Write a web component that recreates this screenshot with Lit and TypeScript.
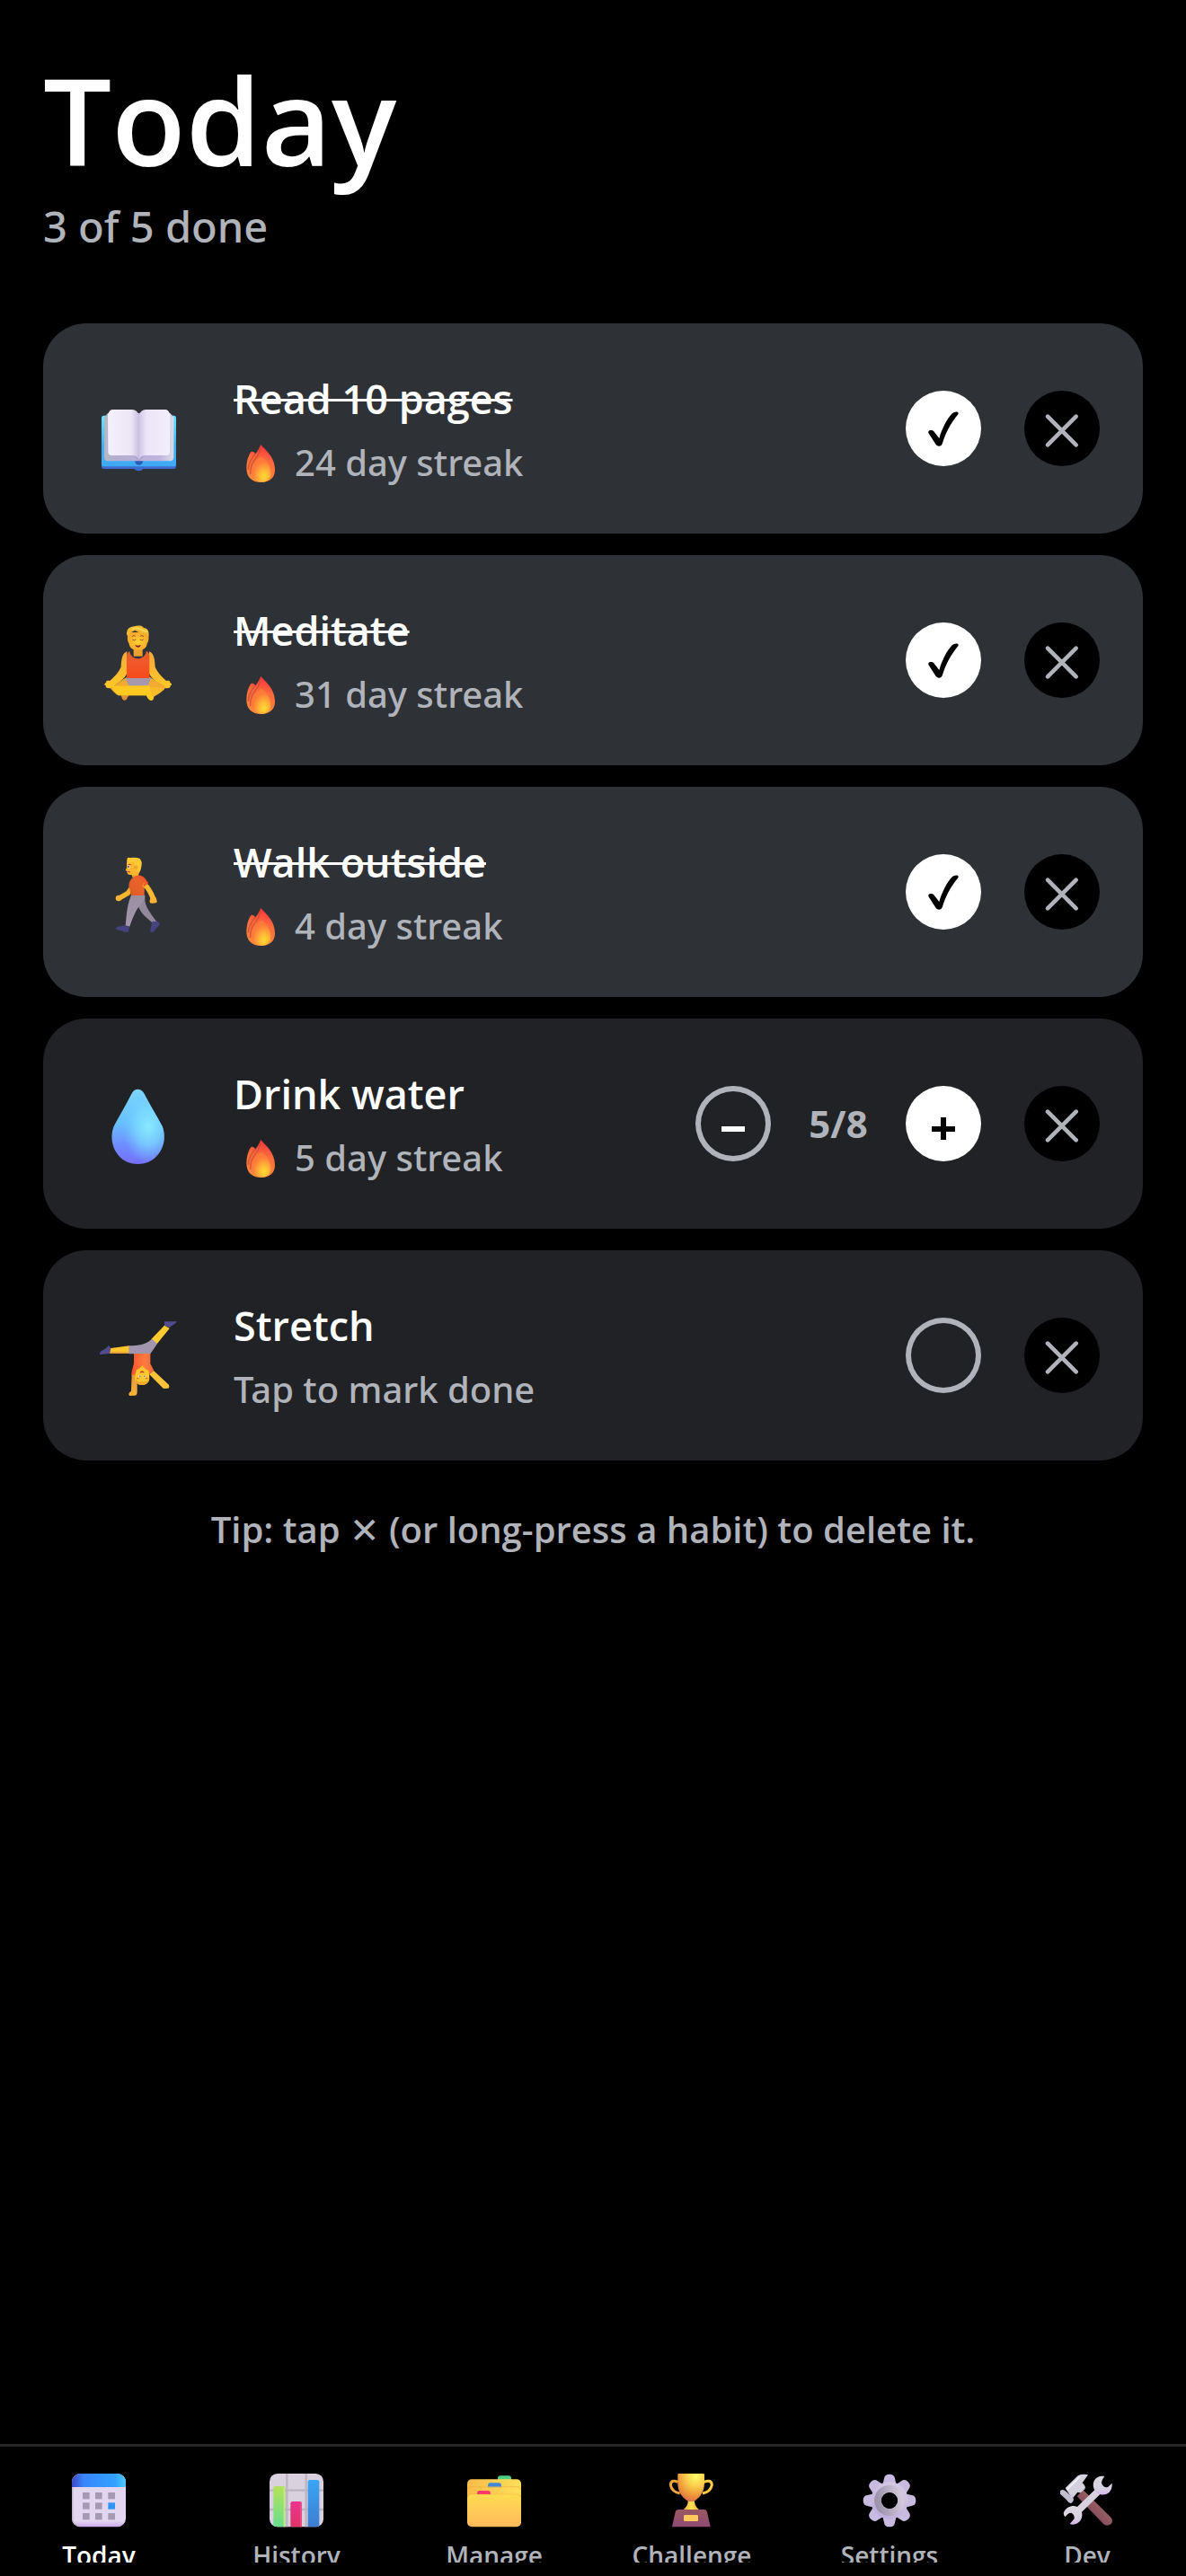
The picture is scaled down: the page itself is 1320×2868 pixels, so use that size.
import { LitElement, html, css, svg, nothing, type TemplateResult } from 'lit';
import { customElement, property, state } from 'lit/decorators.js';
import { classMap } from 'lit/directives/class-map.js';

interface Habit {
  name: string;
  icon: string;
  streak: number;
  count: number;
  target: number;
}

const art: Record<string, TemplateResult> = {
  book: html`<svg viewBox="168 207 348 348" aria-hidden="true">
    <defs>
      <linearGradient id="bookCover" x1="0" y1="0" x2="0" y2="1">
        <stop offset="0" stop-color="#6be4ff" /><stop offset=".6" stop-color="#45aef0" /><stop offset="1" stop-color="#3fa9f5" />
      </linearGradient>
      <linearGradient id="bookLeft"><stop offset="0" stop-color="#f4f0fc" /><stop offset=".75" stop-color="#ece6f6" /><stop offset="1" stop-color="#c9bfdf" /></linearGradient>
      <linearGradient id="bookRight"><stop offset="0" stop-color="#cfc6e6" /><stop offset=".25" stop-color="#ece6f8" /><stop offset="1" stop-color="#f2eefb" /></linearGradient>
      <linearGradient id="bookEdge"><stop offset="0" stop-color="#b4b8c6" /><stop offset=".2" stop-color="#b3aed2" /><stop offset=".8" stop-color="#c0b4de" /><stop offset="1" stop-color="#d9dbe6" /></linearGradient>
    </defs>
    <path d="M227 338H460Q468 338 468 348V508Q468 516 460 516H358Q354 523 344 523T328 516H227Q219 516 219 508V348Q219 338 227 338Z" fill="#3d6bd0" />
    <path d="M227 338H460Q468 338 468 348V500Q468 508 460 508H227Q219 508 219 500V348Q219 338 227 338Z" fill="url(#bookCover)" />
    <path d="M330 488H358Q356 503 344 503T330 488Z" fill="#2b5cb5" />
    <path d="M240 330L228 344V476Q228 490 243 490H445Q460 490 460 476V344L448 330Z" fill="url(#bookEdge)" />
    <path d="M326 471L344 490L362 471Z" fill="#a79bc8" />
    <path d="M240 334Q246 318 256 318H322Q338 320 344 335V488Q338 471 322 471H252Q241 471 241 460Z" fill="url(#bookLeft)" />
    <path d="M448 334Q442 318 432 318H366Q350 320 344 335V488Q350 471 366 471H436Q447 471 447 460Z" fill="url(#bookRight)" />
  </svg>`,

  meditate: html`<svg viewBox="18 51 348 348" aria-hidden="true">
    <defs>
      <linearGradient id="medShirt" x1="0" y1="0" x2="0" y2="1"><stop offset="0" stop-color="#d9622f" /><stop offset=".4" stop-color="#f0582a" /><stop offset="1" stop-color="#f64a1c" /></linearGradient>
      <linearGradient id="medArm" x1="0" y1="0" x2="0" y2="1"><stop offset="0" stop-color="#f2a93a" /><stop offset="1" stop-color="#ffc928" /></linearGradient>
      <radialGradient id="medFace"><stop offset="0" stop-color="#ffd02e" /><stop offset="1" stop-color="#f6a92c" /></radialGradient>
    </defs>
    <path d="M133 338L138 354Q142 361 151 358L162 340Z" fill="#dd9038" />
    <path d="M176 188H206V212H176Z" fill="#eda02c" />
    <path d="M154 196C138 202 135 222 134 248C126 266 112 280 97 294C88 292 82 296 85 299C76 304 78 309 84 310C80 316 88 319 94 319C104 320 110 314 118 306C134 296 148 284 155 268Z" fill="url(#medArm)" />
    <path d="M228 196C244 202 247 222 248 248C256 266 270 280 285 294C294 292 300 296 297 299C306 304 304 309 298 310C302 316 294 319 288 319C278 320 272 314 264 306C248 296 234 284 227 268Z" fill="url(#medArm)" />
    <path d="M140 290L158 278H226L246 292L270 306C284 310 284 322 272 328C262 338 246 343 234 343H124C112 334 104 326 98 318Q120 306 140 290Z" fill="#f2ab31" />
    <path d="M148 285H234L222 318H164Z" fill="#a799ad" />
    <path d="M104 311L228 310L244 346Q244 360 234 360Q226 360 218 343H126Q110 332 104 311Z" fill="#ffc91f" />
    <path d="M228 314L238 346Q242 351 243 347Q270 334 278 318Z" fill="#f8b92b" />
    <path d="M163 195C166 228 214 228 219 194Q229 198 229 212V285H153V212Q153 200 163 195Z" fill="url(#medShirt)" />
    <path d="M158 132Q152 158 160 168Q164 193 191 193Q218 193 222 168Q230 158 224 132Z" fill="url(#medFace)" />
    <path d="M157 146C152 140 152 134 154 130C156 116 168 114 178 112C188 109 204 108 210 117C224 118 229 130 226 146Q222 138 212 135Q192 134 182 126Q164 130 157 146Z" fill="#f0bb32" />
    <path d="M170 122Q184 114 198 121T222 130" fill="none" stroke="#ffd64f" stroke-width="6" />
    <path d="M171 146Q177 140 183 145M198 145Q204 140 210 146M172 156Q178 161 184 156M197 156Q203 161 209 156" fill="none" stroke="#a34d2f" stroke-width="3" />
    <path d="M180 174Q191 179 201 174Q199 183 191 182Q183 182 180 174Z" fill="#8d1f2e" />
  </svg>`,

  walk: html`<svg viewBox="18 15 348 348" aria-hidden="true">
    <defs>
      <linearGradient id="walkShirt" x1="0" y1="1" x2="1" y2="0"><stop offset="0" stop-color="#dd5a22" /><stop offset=".6" stop-color="#e9642d" /><stop offset="1" stop-color="#fb4a25" /></linearGradient>
      <linearGradient id="walkLeg" x1="0" y1="0" x2="0" y2="1"><stop offset="0" stop-color="#9b8fa2" /><stop offset="1" stop-color="#a297ab" /></linearGradient>
    </defs>
    <path d="M168 178L157 193L130 209" fill="none" stroke="#f7b52f" stroke-width="16" stroke-linecap="round" stroke-linejoin="round" />
    <circle cx="126" cy="210" r="10" fill="#f9b233" />
    <path d="M192 236L214 206C212 230 222 248 252 287L240 293C220 276 200 262 192 236Z" fill="#93879b" />
    <path d="M168 200H214C216 222 194 232 183 256C174 274 168 288 163 305L149 301C152 278 152 236 168 200Z" fill="url(#walkLeg)" />
    <path d="M148 300Q156 308 162 304L159 323H144C138 317 122 318 117 312C118 303 134 305 148 300Z" fill="#46427f" />
    <path d="M240 286Q248 292 252 285L264 293C262 305 250 308 245 320Q238 326 232 322C232 308 236 298 240 286Z" fill="#46427f" />
    <path d="M168 120H194L192 140H172Z" fill="#eda42c" />
    <path d="M175 140Q186 132 198 134C212 138 220 148 222 159L212 170V201H168C164 188 164 180 160 170C160 156 166 146 175 140Z" fill="url(#walkShirt)" />
    <path d="M215 167Q228 178 242 212" fill="none" stroke="#fbb92f" stroke-width="17" stroke-linecap="round" />
    <path d="M207 164L222 153L225 160L211 172Z" fill="#fb5425" />
    <path d="M232 210L250 208Q256 220 253 225Q238 229 231 226Q228 218 232 210Z" fill="#fbb331" />
    <path d="M153 90V108L149 116L154 121Q154 132 164 132L184 134Q198 128 200 112L198 88Z" fill="#fdb62f" />
    <path d="M154 92Q152 72 162 75Q184 72 196 77Q206 86 202 104Q200 118 192 121Q184 118 182 108L176 90Q164 94 154 92Z" fill="#ffc935" />
    <circle cx="184" cy="107" r="7" fill="#f4a42c" />
    <ellipse cx="160" cy="105" rx="4" ry="5" fill="#fff" />
    <circle cx="159" cy="105" r="3" fill="#5a3550" />
    <path d="M158 97L167 98M155 121L165 123" stroke="#c23b2c" stroke-width="3" />
  </svg>`,

  drop: html`<svg viewBox="18 39 348 348" aria-hidden="true">
    <defs>
      <linearGradient id="dropBase" x1="0" y1="0" x2="0" y2="1">
        <stop offset="0" stop-color="#7bd6fb" /><stop offset=".45" stop-color="#68bffd" /><stop offset=".75" stop-color="#6f8cff" /><stop offset="1" stop-color="#7470fb" />
      </linearGradient>
      <radialGradient id="dropGlow" cx=".7" cy=".5" r=".5"><stop offset="0" stop-color="#8ae9ff" /><stop offset=".5" stop-color="#7bdcff" stop-opacity=".7" /><stop offset="1" stop-color="#6fc8ff" stop-opacity="0" /></radialGradient>
    </defs>
    <path d="M171 110Q178 98 190 98T210 110C228 146 252 184 272 222C294 278 258 348 191 348C122 348 88 278 110 222C130 184 153 146 171 110Z" fill="url(#dropBase)" />
    <path d="M171 110Q178 98 190 98T210 110C228 146 252 184 272 222C294 278 258 348 191 348C122 348 88 278 110 222C130 184 153 146 171 110Z" fill="url(#dropGlow)" />
  </svg>`,

  cartwheel: html`<svg viewBox="18 33 348 348" aria-hidden="true">
    <defs>
      <linearGradient id="cartShirt"><stop offset="0" stop-color="#f7552c" /><stop offset=".6" stop-color="#ff7a3d" /><stop offset="1" stop-color="#ee6a38" /></linearGradient>
      <linearGradient id="cartArm" x1="0" y1="0" x2="0" y2="1"><stop offset="0" stop-color="#e8953a" /><stop offset="1" stop-color="#f6b23a" /></linearGradient>
    </defs>
    <path d="M279 94H320C319 102 304 105 297 115L279 107Z" fill="#514c8d" />
    <path d="M279 107L296 117L254 169L235 153Z" fill="#ffcb2e" />
    <path d="M92 174L101 184L98 201C85 200 72 206 63 203C62 190 82 190 92 174Z" fill="#514c8d" />
    <path d="M100 183L162 175V201L97 200Z" fill="#ffc52c" />
    <path d="M98 195L162 196V201L97 200Z" fill="#e89d38" />
    <path d="M160 175C192 174 216 172 237 152L255 168C246 182 240 190 232 202H160Z" fill="#a296ae" />
    <path d="M170 268H188L188 330Q188 341 180 341L162 342Q157 336 163 330L168 326Z" fill="url(#cartArm)" />
    <path d="M228 270L243 258L292 304Q298 312 292 317L276 318L266 308Z" fill="#fbc33a" />
    <path d="M177 201H232V235L244 258L228 270L186 272H169C170 252 177 242 177 230Z" fill="url(#cartShirt)" />
    <path d="M205 241Q212 252 226 258Q230 272 228 290Q222 306 204 306Q186 304 180 290Q180 268 186 256Q198 252 205 241Z" fill="#ffc72f" />
    <path d="M180 284Q182 306 204 306Q226 304 229 286Q218 298 204 294Q190 298 180 284Z" fill="#efa92c" />
    <path d="M198 264Q204 256 211 264Q204 261 198 264Z" fill="#a3282e" stroke="#a3282e" stroke-width="2" />
    <path d="M193 277H200M209 277H216" stroke="#fff" stroke-width="5" />
    <path d="M196 277H199M211 277H214" stroke="#55354d" stroke-width="5" />
    <path d="M187 284H193M217 284H223" stroke="#d8582f" stroke-width="4" />
  </svg>`,

  flame: html`<svg viewBox="504 243 168 168" aria-hidden="true">
    <defs>
      <linearGradient id="flameOuter" x1=".6" y1="0" x2=".4" y2="1"><stop offset="0" stop-color="#fb2f3f" /><stop offset=".4" stop-color="#fa6b3c" /><stop offset="1" stop-color="#ff8a3c" /></linearGradient>
      <radialGradient id="flameInner" cx=".65" cy=".78" r=".6"><stop offset="0" stop-color="#ffdb30" /><stop offset=".4" stop-color="#ffb936" /><stop offset="1" stop-color="#fd7a3a" /></radialGradient>
    </defs>
    <path d="M595 267C608 284 642 306 642 352C642 380 622 393 597 393C564 393 547 375 547 345C547 322 553 304 562 291Q572 288 577 298C584 290 589 280 595 267Z" fill="url(#flameOuter)" />
    <path d="M595 272C592 288 590 298 580 310C568 324 558 342 560 366M577 297C566 310 554 325 553 350" fill="none" stroke="#c94a30" stroke-width="5" opacity=".7" />
    <path d="M597 308C614 318 628 338 628 362C628 382 616 392 597 392C575 391 564 378 564 358C564 336 580 318 597 308Z" fill="url(#flameInner)" />
  </svg>`,

  calendar: html`<svg viewBox="120 162 180 180" aria-hidden="true">
    <defs>
      <linearGradient id="calTop"><stop offset="0" stop-color="#3d49c8" /><stop offset=".22" stop-color="#3a85fb" /><stop offset=".8" stop-color="#31a2ff" /><stop offset="1" stop-color="#4fc8ff" /></linearGradient>
      <linearGradient id="calBody" x1="0" y1="0" x2="0" y2="1"><stop offset="0" stop-color="#e2d5ee" /><stop offset=".88" stop-color="#e3d6ef" /><stop offset="1" stop-color="#c9a2f0" /></linearGradient>
      <clipPath id="calClip"><rect x="120" y="162" width="180" height="178" rx="28" /></clipPath>
    </defs>
    <g clip-path="url(#calClip)">
      <rect x="120" y="162" width="180" height="180" fill="url(#calBody)" />
      <path d="M122 207V312Q122 338 148 338" fill="none" stroke="#bfb6c9" stroke-width="5" />
      <rect x="120" y="162" width="180" height="45" fill="url(#calTop)" />
    </g>
    ${[225, 259, 294].map((y) =>
      [156, 198, 241].map(
        (x) => svg`<rect x=${x} y=${y} width="23" height="22" fill=${x === 241 && y === 259 ? '#2f94f5' : '#a59ab3'} />`
      )
    )}
  </svg>`,

  chart: html`<svg viewBox="780 162 180 180" aria-hidden="true">
    <defs>
      <linearGradient id="barGreen" x1="0" y1="0" x2="0" y2="1"><stop offset="0" stop-color="#b4e35a" /><stop offset="1" stop-color="#62dd92" /></linearGradient>
      <linearGradient id="barPink" x1="0" y1="0" x2="0" y2="1"><stop offset="0" stop-color="#ea3390" /><stop offset="1" stop-color="#dd3560" /></linearGradient>
      <linearGradient id="barBlue" x1="0" y1="0" x2="0" y2="1"><stop offset="0" stop-color="#3aa6f5" /><stop offset="1" stop-color="#3f7cd0" /></linearGradient>
      <clipPath id="chartClip"><rect x="780" y="162" width="180" height="178" rx="26" /></clipPath>
    </defs>
    <g clip-path="url(#chartClip)">
      <rect x="780" y="162" width="180" height="180" fill="#d9d1de" />
      <path d="M838 162V342M902 162V342M780 218H960M780 282H960" stroke="#bdb4c3" stroke-width="7" />
      <rect x="793" y="204" width="39" height="146" rx="7" fill="url(#barGreen)" />
      <rect x="850" y="255" width="38" height="95" rx="7" fill="url(#barPink)" />
      <rect x="908" y="183" width="38" height="160" rx="7" fill="url(#barBlue)" />
      <path d="M829 210V342" stroke="#c2f06a" stroke-width="4" />
      <path d="M885 262V342" stroke="#f25a92" stroke-width="4" />
    </g>
  </svg>`,

  folders: html`<svg viewBox="180 162 180 180" aria-hidden="true">
    <defs>
      <linearGradient id="folderFront" x1="0" y1="0" x2="0" y2="1"><stop offset="0" stop-color="#ffdc51" /><stop offset="1" stop-color="#ffb95c" /></linearGradient>
      <linearGradient id="folderBack"><stop offset="0" stop-color="#f8bb49" /><stop offset="1" stop-color="#ffdf5a" /></linearGradient>
    </defs>
    <path d="M282 186V178Q282 169 291 169H318Q327 169 327 178V186Z" fill="#4fcf82" />
    <rect x="180" y="181" width="180" height="110" rx="15" fill="url(#folderBack)" />
    <path d="M249 210V202Q249 193 258 193H285Q294 193 294 202V210Z" fill="#4189d6" />
    <path d="M180 215Q186 203 198 207H342Q354 203 360 215" fill="none" stroke="#eeab42" stroke-width="3" />
    <rect x="180" y="208" width="180" height="100" rx="15" fill="url(#folderBack)" />
    <path d="M213 236V228Q213 219 222 219H249Q258 219 258 228V236Z" fill="#fd3769" />
    <path d="M180 240Q186 229 198 232H342Q354 229 360 240" fill="none" stroke="#eeab42" stroke-width="3" />
    <rect x="180" y="232" width="180" height="108" rx="15" fill="url(#folderFront)" />
  </svg>`,

  trophy: html`<svg viewBox="840 162 180 180" aria-hidden="true">
    <defs>
      <radialGradient id="cup" cx=".68" cy=".1" r=".95"><stop offset="0" stop-color="#fffb6b" /><stop offset=".35" stop-color="#fbd14d" /><stop offset=".75" stop-color="#ed9239" /><stop offset="1" stop-color="#dc6d52" /></radialGradient>
      <linearGradient id="cupStem"><stop offset="0" stop-color="#ef9a35" /><stop offset=".5" stop-color="#ffe152" /><stop offset="1" stop-color="#f6a93a" /></linearGradient>
      <linearGradient id="cupBase" x1="0" y1="0" x2="0" y2="1"><stop offset="0" stop-color="#9a5962" /><stop offset="1" stop-color="#914a74" /></linearGradient>
    </defs>
    <path d="M884 190Q860 180 859 200Q862 222 890 228" fill="none" stroke="#f2a53b" stroke-width="9" />
    <path d="M971 190Q996 180 997 200Q993 222 966 228" fill="none" stroke="#fbcb45" stroke-width="9" />
    <path d="M917 250H939C938 267 946 275 956 284H900C910 275 918 267 917 250Z" fill="url(#cupStem)" />
    <path d="M886 162H969Q972 162 972 166V196C971 228 952 246 936 255H920C902 246 884 228 883 196V166Q883 162 886 162Z" fill="url(#cup)" />
    <path d="M886 282H972Q979 282 981 290L992 340H864L875 290Q877 282 886 282Z" fill="url(#cupBase)" />
    <rect x="903" y="300" width="48" height="21" rx="4" fill="#ffc95c" />
  </svg>`,

  gear: html`<svg viewBox="180 162 180 180" aria-hidden="true">
    <defs>
      <linearGradient id="gearRing" x1="0" y1=".5" x2="1" y2=".3"><stop offset="0" stop-color="#9e94ac" /><stop offset="1" stop-color="#d2c8da" /></linearGradient>
      <linearGradient id="gearBody" gradientUnits="userSpaceOnUse" x1="220" y1="340" x2="300" y2="164"><stop offset="0" stop-color="#b9a5dc" /><stop offset="1" stop-color="#d9cfe6" /></linearGradient>
    </defs>
    <g fill="#c9bbe0">
      ${[0, 45, 90, 135, 180, 225, 270, 315].map(
        (deg) => svg`<path d="M246 205L252 178Q254 164 270 164T288 178L294 205Z" transform="rotate(${deg} 270 252)" />`
      )}
    </g>
    <circle cx="270" cy="252" r="45" fill="none" stroke="url(#gearBody)" stroke-width="34" />
    <circle cx="270" cy="252" r="39" fill="none" stroke="url(#gearRing)" stroke-width="24" />
    <circle cx="270" cy="252" r="27" fill="#000" />
  </svg>`,

  tools: html`<svg viewBox="840 162 180 180" aria-hidden="true">
    <defs>
      <linearGradient id="toolGrip" x1="0" y1="1" x2=".6" y2=".4"><stop offset="0" stop-color="#6f2766" /><stop offset="1" stop-color="#96605f" /></linearGradient>
      <linearGradient id="toolSteel" x1="0" y1="0" x2="0" y2="1"><stop offset="0" stop-color="#dcd8e0" /><stop offset=".7" stop-color="#d8d0e0" /><stop offset="1" stop-color="#d3b3ea" /></linearGradient>
    </defs>
    <path d="M896 238L916 216L1009 308Q1018 320 1010 330Q996 340 984 330Z" fill="url(#toolGrip)" />
    <path d="M857 210L899 169Q914 162 933 166L914 193Q928 206 922 214L908 226L898 224L880 246Z" fill="#d4d0de" />
    <path d="M862 216L906 172" stroke="#f0edf5" stroke-width="6" />
    <path d="M841 218Q850 213 859 221L882 242Q890 250 876 262Q868 260 860 248L840 230Q835 223 841 218Z" fill="#c4bfce" />
    <path d="M900 286L966 222" stroke="#d6d1dc" stroke-width="23" />
    <path d="M988 171C960 166 945 188 952 211C960 234 990 240 1005 223Q1014 212 1013 194L999 207Q984 210 978 194Q978 184 988 171Z" fill="url(#toolSteel)" />
    <path d="M852 291C862 268 892 262 908 281C920 301 910 326 890 331Q880 334 872 330L887 313Q888 298 877 293Q866 292 857 307Q849 300 852 291Z" fill="url(#toolSteel)" />
  </svg>`,
};

const glyphs: Record<string, TemplateResult> = {
  check: html`<svg viewBox="0 0 252 252" aria-hidden="true">
    <path d="M76 141Q74 133 83 132Q90 131 94 136L112 159C120 130 138 92 156 75Q163 69 174 71Q178 74 175 79C152 107 134 138 122 178Q119 186 111 185Q105 185 101 180Z" fill="#000" />
  </svg>`,
  cross: html`<svg viewBox="0 0 252 252" aria-hidden="true">
    <path d="M78 86L173 181M173 86L78 181" stroke="currentColor" stroke-width="14" stroke-linecap="round" />
  </svg>`,
  minus: html`<svg viewBox="0 0 84 84" aria-hidden="true"><path d="M29 48H55" stroke="#fff" stroke-width="6" /></svg>`,
  plus: html`<svg viewBox="0 0 84 84" aria-hidden="true"><path d="M29 48H55M42 35V60" stroke="#000" stroke-width="6" /></svg>`,
};

@customElement('habit-row')
export class HabitRow extends LitElement {
  @property({ attribute: false }) habit!: Habit;

  static styles = css`
    :host {
      display: block;
    }

    .card {
      display: flex;
      align-items: center;
      gap: 24px;
      box-sizing: border-box;
      min-height: 234px;
      padding: 48px;
      border-radius: 48px;
      background: #212225;
    }

    .card.done {
      background: #2e3135;
    }

    .icon {
      flex: none;
      width: 116px;
      height: 116px;
    }

    .icon svg,
    .flame svg,
    button svg {
      display: block;
      width: 100%;
      height: 100%;
    }

    .info {
      flex: 1;
      min-width: 0;
      display: flex;
      flex-direction: column;
      gap: 8px;
      margin-left: 24px;
    }

    .name {
      margin: 0;
      font-size: 45px;
      line-height: 68px;
      font-weight: 600;
      color: #fff;
    }

    .done .name span {
      text-decoration: line-through;
      text-decoration-thickness: 3px;
      text-decoration-skip-ink: none;
    }

    .status {
      display: flex;
      align-items: center;
      gap: 12px;
      margin: 0;
      font-family: 'Noto Sans', 'DejaVu Sans', sans-serif;
      font-size: 40px;
      line-height: 58px;
      font-weight: 500;
      color: #b0b4ba;
    }

    .flame {
      width: 56px;
      height: 56px;
    }

    .actions {
      display: flex;
      align-items: center;
      gap: 48px;
    }

    .stepper {
      display: flex;
      align-items: center;
      gap: 24px;
    }

    .count {
      min-width: 102px;
      text-align: center;
      font-size: 42px;
      line-height: 56px;
      font-weight: 700;
      color: #b0b4ba;
    }

    button {
      flex: none;
      width: 84px;
      height: 84px;
      padding: 0;
      border: 0;
      border-radius: 50%;
      background: #fff;
      color: #b0b4ba;
      cursor: pointer;
    }

    .outline {
      background: transparent;
      box-shadow: inset 0 0 0 6px #b0b4ba;
    }

    .delete {
      background: #000;
    }
  `;

  private step(delta: number) {
    this.dispatchEvent(new CustomEvent('step', { detail: delta }));
  }

  private remove() {
    this.dispatchEvent(new CustomEvent('remove'));
  }

  private renderControl(done: boolean) {
    const { name, count, target } = this.habit;
    if (target > 1) {
      return html`
        <div class="stepper">
          <button class="outline" aria-label="Decrease ${name}" @click=${() => this.step(-1)}>${glyphs.minus}</button>
          <span class="count">${count}/${target}</span>
          <button aria-label="Increase ${name}" @click=${() => this.step(1)}>${glyphs.plus}</button>
        </div>
      `;
    }
    return html`
      <button
        class=${classMap({ outline: !done })}
        aria-label="Mark ${name} done"
        aria-pressed=${done}
        @click=${() => this.step(done ? -1 : 1)}
      >${done ? glyphs.check : nothing}</button>
    `;
  }

  render() {
    const { name, icon, streak, count, target } = this.habit;
    const done = count >= target;
    return html`
      <article class=${classMap({ card: true, done })}>
        <div class="icon">${art[icon]}</div>
        <div class="info">
          <h2 class="name"><span>${name}</span></h2>
          <p class="status">
            ${streak > 0
              ? html`<span class="flame">${art.flame}</span><span>${streak} day streak</span>`
              : html`<span>Tap to mark done</span>`}
          </p>
        </div>
        <div class="actions">
          ${this.renderControl(done)}
          <button class="delete" aria-label="Delete ${name}" @click=${this.remove}>${glyphs.cross}</button>
        </div>
      </article>
    `;
  }
}

@customElement('tab-bar')
export class TabBar extends LitElement {
  @property() active = 'Today';

  private tabs = [
    { label: 'Today', icon: 'calendar' },
    { label: 'History', icon: 'chart' },
    { label: 'Manage', icon: 'folders' },
    { label: 'Challenge', icon: 'trophy' },
    { label: 'Settings', icon: 'gear' },
    { label: 'Dev', icon: 'tools' },
  ];

  static styles = css`
    :host {
      display: block;
    }

    nav {
      display: grid;
      grid-template-columns: repeat(6, 1fr);
      padding: 30px 0 15px;
      border-top: 3px solid #272728;
      background: #000;
    }

    a {
      display: flex;
      flex-direction: column;
      align-items: center;
      gap: 10px;
      color: #b0b4ba;
      text-decoration: none;
    }

    a.active {
      color: #fff;
    }

    svg {
      display: block;
      width: 60px;
      height: 60px;
    }

    .label {
      height: 29px;
      overflow: hidden;
      font-size: 28px;
      line-height: 42px;
      font-weight: 600;
    }
  `;

  render() {
    return html`
      <nav aria-label="Main">
        ${this.tabs.map(
          (tab) => html`
            <a href="#${tab.label.toLowerCase()}" class=${classMap({ active: tab.label === this.active })}>
              ${art[tab.icon]}
              <span class="label">${tab.label}</span>
            </a>
          `
        )}
      </nav>
    `;
  }
}

@customElement('app-root')
export class AppRoot extends LitElement {
  @state() private habits: Habit[] = [
    { name: 'Read 10 pages', icon: 'book', streak: 24, count: 1, target: 1 },
    { name: 'Meditate', icon: 'meditate', streak: 31, count: 1, target: 1 },
    { name: 'Walk outside', icon: 'walk', streak: 4, count: 1, target: 1 },
    { name: 'Drink water', icon: 'drop', streak: 5, count: 5, target: 8 },
    { name: 'Stretch', icon: 'cartwheel', streak: 0, count: 0, target: 1 },
  ];

  static styles = css`
    :host {
      display: flex;
      flex-direction: column;
      min-height: 100vh;
      background: #000;
      color: #fff;
      font-family: 'Open Sans', 'Noto Sans', 'DejaVu Sans', sans-serif;
    }

    main {
      flex: 1;
      padding: 48px;
    }

    h1 {
      margin: 0;
      font-size: 135px;
      line-height: 170px;
      font-weight: 600;
    }

    .summary {
      margin: 0 0 74px;
      font-family: 'Noto Sans', 'DejaVu Sans', sans-serif;
      font-size: 47px;
      line-height: 68px;
      font-weight: 500;
      color: #b0b4ba;
    }

    .list {
      display: flex;
      flex-direction: column;
      gap: 24px;
    }

    .tip {
      margin: 48px 0 0;
      text-align: center;
      font-size: 40px;
      line-height: 58px;
      font-weight: 600;
      color: #b0b4ba;
    }
  `;

  private step(index: number, delta: number) {
    this.habits = this.habits.map((h, i) =>
      i === index ? { ...h, count: Math.min(h.target, Math.max(0, h.count + delta)) } : h
    );
  }

  private remove(index: number) {
    this.habits = this.habits.filter((_, i) => i !== index);
  }

  render() {
    const done = this.habits.filter((h) => h.count >= h.target).length;
    return html`
      <main>
        <h1>Today</h1>
        <p class="summary">${done} of ${this.habits.length} done</p>
        <section class="list">
          ${this.habits.map(
            (habit, i) => html`
              <habit-row
                .habit=${habit}
                @step=${(e: CustomEvent<number>) => this.step(i, e.detail)}
                @remove=${() => this.remove(i)}
              ></habit-row>
            `
          )}
        </section>
        <p class="tip">Tip: tap ✕ (or long-press a habit) to delete it.</p>
      </main>
      <tab-bar active="Today"></tab-bar>
    `;
  }
}
